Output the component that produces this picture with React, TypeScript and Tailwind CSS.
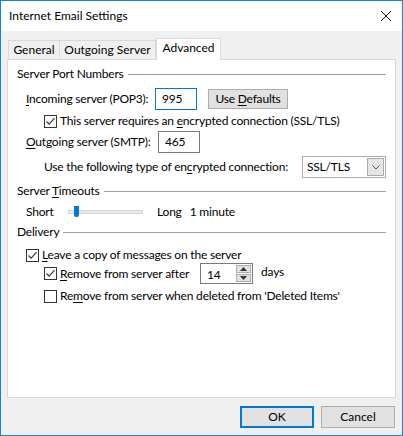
import React from "react";

const font = { fontFamily: 'Lato, "Segoe UI", "Noto Sans", sans-serif' };

function Check({ checked }: { checked?: boolean }) {
  return (
    <span className="flex h-[13px] w-[13px] shrink-0 items-center justify-center border border-[#333333] bg-white">
      {checked ? (
        <svg width="11" height="11" viewBox="0 0 11 11">
          <path d="M1.5 5.5 L4.2 8.2 L9.5 2.2" fill="none" stroke="#333333" strokeWidth="1.1" />
        </svg>
      ) : null}
    </span>
  );
}

function Section({ children }: { children: React.ReactNode }) {
  return (
    <div className="flex items-center gap-[4px] pr-[9px]">
      <span>{children}</span>
      <span className="h-px flex-1 bg-[#a0a0a0]" />
    </div>
  );
}

function U({ children }: { children: React.ReactNode }) {
  return <span className="underline underline-offset-2">{children}</span>;
}

export default function App() {
  return (
    <div
      className="flex h-[436px] w-[403px] flex-col whitespace-nowrap border border-[#1883d7] bg-[#f0f0f0] text-[12px] leading-[16px] text-black"
      style={font}
    >
      <div className="flex h-[30px] items-center justify-between bg-white pl-[8px] pr-[10px]">
        <span className="text-[12px]">Internet Email Settings</span>
        <svg width="12" height="12" viewBox="0 0 12 12">
          <path d="M1 1 L11 11 M11 1 L1 11" stroke="#111" strokeWidth="1" />
        </svg>
      </div>

      <div className="flex flex-1 flex-col px-[6px] pt-[7px]">
        <div className="flex items-end pl-[1px]">
          <div className="flex h-[19px] w-[52px] items-center justify-center border border-b-0 border-[#d9d9d9] bg-[#f0f0f0]">General</div>
          <div className="flex h-[19px] w-[96px] items-center justify-center border border-b-0 border-l-0 border-[#d9d9d9] bg-[#f0f0f0]">Outgoing Server</div>
          <div className="relative z-10 -mb-px flex h-[22px] w-[65px] items-start justify-center border border-b-0 border-[#d9d9d9] bg-white pt-[1px]">Advanced</div>
        </div>

        <div className="flex h-[339px] flex-col border border-[#d9d9d9] bg-white pl-[9px] pt-[6px] tracking-[-0.2px]">
          <Section>Server Port Numbers</Section>

          <div className="mt-[6px] flex items-center pl-[9px]">
            <span className="w-[129px]"><U>I</U>ncoming server (POP3):</span>
            <div className="flex h-[22px] w-[42px] items-center border border-[#0078d7] pl-[6px]">995</div>
            <button className="ml-[11px] h-[20px] w-[80px] border border-[#adadad] bg-[#e1e1e1] text-center">
              <span>Use <U>D</U>efaults</span>
            </button>
          </div>

          <div className="mt-[3px] flex items-center gap-[3px] pl-[27px]">
            <Check checked />
            <span>This server requires an <U>e</U>ncrypted connection (SSL/TLS)</span>
          </div>

          <div className="mt-[2px] flex items-center pl-[9px]">
            <span className="w-[132px]"><U>O</U>utgoing server (SMTP):</span>
            <div className="flex h-[22px] w-[42px] items-center border border-[#7a7a7a] pl-[6px]">465</div>
          </div>

          <div className="mt-[3px] flex items-center pl-[27px]">
            <span className="w-[258px]">Use the following type of en<U>c</U>rypted connection:</span>
            <div className="flex h-[22px] w-[84px] items-center justify-between border border-[#acacac] pl-[4px] pr-[1px]">
              <span>SSL/TLS</span>
              <span className="flex h-[18px] w-[17px] items-center justify-center border border-[#acacac] bg-[#e5e5e5]">
                <svg width="8" height="5" viewBox="0 0 8 5">
                  <path d="M0.5 0.5 L4 4 L7.5 0.5" fill="none" stroke="#555" strokeWidth="1" />
                </svg>
              </span>
            </div>
          </div>

          <div className="mt-[5px]">
            <Section>Server <U>T</U>imeouts</Section>
          </div>

          <div className="mt-[5px] flex items-center pl-[9px]">
            <span className="w-[42px]">Short</span>
            <div className="relative flex h-[12px] w-[75px] items-center">
              <span className="h-[4px] w-full border border-[#d6d6d6] bg-[#e7eaea]" />
              <span className="absolute left-[6px] top-0 h-[11px] w-[5px] rounded-b-[2px] bg-[#0078d7]" />
            </div>
            <span className="ml-[14px]">Long</span>
            <span className="ml-[8px]">1 minute</span>
          </div>

          <div className="mt-[4px]">
            <Section>Delivery</Section>
          </div>

          <div className="mt-[7px] flex items-center gap-[3px] pl-[9px]">
            <Check checked />
            <span><U>L</U>eave a copy of messages on the server</span>
          </div>

          <div className="flex items-center pl-[27px]">
            <Check checked />
            <span className="ml-[3px] w-[140px]"><U>R</U>emove from server after</span>
            <div className="flex h-[21px] w-[53px] items-stretch border border-[#7a7a7a]">
              <span className="flex flex-1 items-center pl-[6px] pt-[2px]">14</span>
              <span className="flex w-[17px] flex-col gap-px p-px">
                <span className="flex flex-1 items-center justify-center border border-[#adadad] bg-[#e1e1e1]">
                  <svg width="7" height="4" viewBox="0 0 7 4"><path d="M0 4 L3.5 0 L7 4 Z" fill="#333" /></svg>
                </span>
                <span className="flex flex-1 items-center justify-center border border-[#adadad] bg-[#e1e1e1]">
                  <svg width="7" height="4" viewBox="0 0 7 4"><path d="M0 0 L3.5 4 L7 0 Z" fill="#333" /></svg>
                </span>
              </span>
            </div>
            <span className="ml-[8px] -mt-[3px]">days</span>
          </div>

          <div className="mt-[4px] flex items-center gap-[3px] pl-[27px]">
            <Check />
            <span>Re<U>m</U>ove from server when deleted from 'Deleted Items'</span>
          </div>
        </div>

        <div className="flex flex-1 items-center justify-end gap-[7px] pr-[1px] pt-[1px]">
          <button className="flex h-[22px] w-[74px] items-center justify-center border-2 border-[#0078d7] bg-[#e1e1e1]">OK</button>
          <button className="flex h-[22px] w-[74px] items-center justify-center border border-[#adadad] bg-[#e1e1e1]">Cancel</button>
        </div>
      </div>
    </div>
  );
}
